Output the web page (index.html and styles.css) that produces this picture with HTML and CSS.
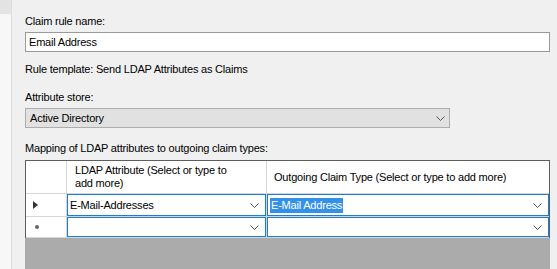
FILE: index.html
```html
<!DOCTYPE html>
<html>
<head>
    <meta charset="UTF-8">
    <link rel="stylesheet" href="styles.css">
</head>
<body>
<div class="page">
    <div class="nav">
        <div class="nav-item on"></div>
    </div>
    <div class="main">
        <p class="label first">Claim rule name:</p>
        <div class="input">Email Address</div>
        <p class="label tpl">Rule template: Send LDAP Attributes as Claims</p>
        <p class="label store">Attribute store:</p>
        <div class="select">
            <span>Active Directory</span>
            <svg class="chev" width="9" height="5" viewBox="0 0 9 5"><polyline points="0.5,0.5 4.5,4.5 8.5,0.5" fill="none" stroke="#555" stroke-width="1"/></svg>
        </div>
        <p class="label map">Mapping of LDAP attributes to outgoing claim types:</p>
        <div class="grid">
            <div class="hd corner"></div>
            <div class="hd c1">LDAP Attribute (Select or type to add more)</div>
            <div class="hd c2">Outgoing Claim Type (Select or type to add more)</div>

            <div class="rh"><span class="arrow"></span></div>
            <div class="cell">
                <div class="combo">
                    <span>E-Mail-Addresses</span>
                    <svg class="chev" width="9" height="5" viewBox="0 0 9 5"><polyline points="0.5,0.5 4.5,4.5 8.5,0.5" fill="none" stroke="#555" stroke-width="1"/></svg>
                </div>
            </div>
            <div class="cell">
                <div class="combo">
                    <span class="sel">E-Mail Address</span>
                    <svg class="chev" width="9" height="5" viewBox="0 0 9 5"><polyline points="0.5,0.5 4.5,4.5 8.5,0.5" fill="none" stroke="#555" stroke-width="1"/></svg>
                </div>
            </div>

            <div class="rh"><span class="dot"></span></div>
            <div class="cell">
                <div class="combo">
                    <span></span>
                    <svg class="chev" width="9" height="5" viewBox="0 0 9 5"><polyline points="0.5,0.5 4.5,4.5 8.5,0.5" fill="none" stroke="#555" stroke-width="1"/></svg>
                </div>
            </div>
            <div class="cell">
                <div class="combo">
                    <span></span>
                    <svg class="chev" width="9" height="5" viewBox="0 0 9 5"><polyline points="0.5,0.5 4.5,4.5 8.5,0.5" fill="none" stroke="#555" stroke-width="1"/></svg>
                </div>
            </div>

            <div class="empty"></div>
        </div>
    </div>
</div>
</body>
</html>
```

FILE: styles.css
```css
body,p,div,span{margin: 0;padding: 0;}
body{width: 557px;height: 269px;overflow: hidden;background: #f0f0f0;
    font-family: "Liberation Sans", Arial, sans-serif;font-size: 11px;letter-spacing: -0.2px;color: #000;}
.page{display: flex;height: 269px;}
.nav{width: 11px;background: #f7f7f7;border-right: 1px solid #dedede;}
.nav-item{height: 14px;}
.nav-item.on{background: #e3e3e3;}
.main{flex: 1;padding: 14px 7px 0 13px;}
.label{line-height: 14px;}
.input{margin-top: 4px;height: 18px;line-height: 18px;border: 1px solid #9a9a9a;background: #fff;padding-left: 3px;}
.tpl{margin-top: 10px;}
.store{margin-top: 14px;}
.select{margin-top: 4px;height: 18px;border: 1px solid #adadad;background: #e1e1e1;
    display: flex;align-items: center;justify-content: space-between;padding: 0 4px 0 4px;width: 415px;}
.map{margin-top: 13px;}
.grid{margin-top: 5px;border: 1px solid #5e5e5e;background: #d6d6d6;
    display: grid;grid-template-columns: 40px 199px 1fr;grid-template-rows: 32px 22px 20px 40px;gap: 1px;}
.hd{background: #fff;display: flex;align-items: center;line-height: 13px;}
.c1{padding: 0 30px 0 8px;}
.c2{padding-left: 7px;}
.rh{background: #fff;display: flex;align-items: center;padding-left: 7px;}
.arrow{width: 0;height: 0;border-top: 4px solid transparent;border-bottom: 4px solid transparent;border-left: 5px solid #333;}
.dot{width: 4px;height: 4px;border-radius: 2px;background: #666;margin-left: 2px;}
.cell{background: #fff;display: flex;}
.combo{flex: 1;border: 1px solid #1a7fd4;display: flex;align-items: center;justify-content: space-between;padding: 0 6px 0 2px;}
.sel{background: #3392e8;color: #fff;padding: 0 1px;line-height: 15px;}
.empty{grid-column: 1 / 4;background: #ababab;margin: 0 -1px -1px -1px;}
```
